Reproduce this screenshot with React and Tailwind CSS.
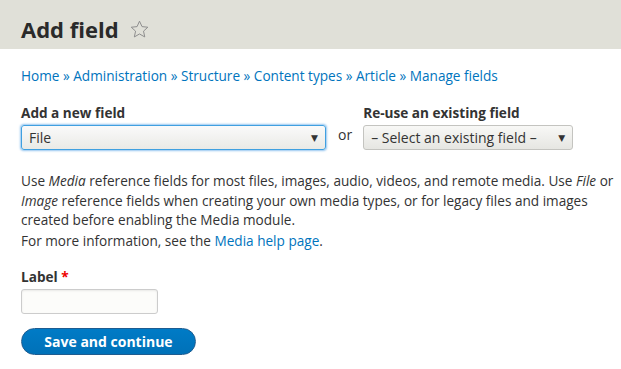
export default function App() {
  const font = { fontFamily: '"Open Sans", "DejaVu Sans", sans-serif' };
  return (
    <div className="min-h-[369px] w-[621px] bg-white text-[#333]" style={font}>
      {/* page title bar */}
      <div className="flex h-[49px] items-center gap-[10px] bg-[#e0e0d8] pl-[21px] pt-[9px]">
        <h1 className="text-[22px] font-bold leading-none text-[#2a2a2a]">Add field</h1>
        <svg width="21" height="21" viewBox="0 0 24 24" className="mt-[1px]">
          <path
            d="M12 2.5l2.9 6.2 6.6.7-4.9 4.5 1.4 6.6L12 17.1l-5.9 3.4 1.4-6.6-4.9-4.5 6.6-.7z"
            fill="none"
            stroke="#8a8a8a"
            strokeWidth="1.1"
            strokeLinejoin="round"
          />
        </svg>
      </div>

      <div className="pl-[21px] pr-[2px]">
        {/* breadcrumb */}
        <nav className="mt-[17px] text-[13.6px] leading-5 text-[#0074bd]">
          Home » Administration » Structure » Content types » Article » Manage fields
        </nav>

        {/* field selectors */}
        <div className="mt-[17px] flex items-end">
          <div>
            <label className="block text-[13.6px] font-bold leading-5">Add a new field</label>
            <div className="mt-[2px] flex h-[25px] w-[305px] items-center justify-between rounded-[3px] border border-[#40a0e0] bg-gradient-to-b from-[#fafafa] to-[#eaeae6] px-[7px] text-[14px] shadow-[0_0_2px_1px_rgba(80,160,230,0.6)]">
              <span>File</span>
              <span className="text-[9px]">▼</span>
            </div>
          </div>
          <span className="ml-[12px] mr-[11px] mb-[5px] text-[14px]">or</span>
          <div>
            <label className="block text-[13.6px] font-bold leading-5">Re-use an existing field</label>
            <div className="mt-[2px] flex h-[25px] w-[210px] items-center justify-between rounded-[3px] border border-[#c4c4c0] bg-gradient-to-b from-[#f8f8f6] to-[#e6e6e2] px-[7px] text-[14px]">
              <span>– Select an existing field –</span>
              <span className="text-[9px]">▼</span>
            </div>
          </div>
        </div>

        {/* description */}
        <div className="mt-[21px] text-[13.6px] leading-[19.5px]">
          <p>
            Use <em>Media</em> reference fields for most files, images, audio, videos, and remote media. Use{' '}
            <em>File</em> or <em>Image</em> reference fields when creating your own media types, or for legacy files
            and images created before enabling the Media module.
          </p>
          <p className="mt-[1px]">
            For more information, see the <span className="text-[#0074bd]">Media help page</span>.
          </p>
        </div>

        {/* label input */}
        <div className="mt-[17px]">
          <label className="block text-[13.6px] font-bold leading-5">
            Label <span className="text-[#e00]">*</span>
          </label>
          <div className="mt-[2px] h-[25px] w-[137px] rounded-[3px] border border-[#ccc] bg-[#fcfcfa] shadow-[inset_0_1px_2px_rgba(0,0,0,0.08)]" />
        </div>

        <button className="mt-[14px] h-[27px] w-[175px] rounded-full border border-[#1e5c90] bg-gradient-to-b from-[#007bc6] to-[#0071b8] text-[14px] font-bold text-white">
          Save and continue
        </button>
      </div>
    </div>
  );
}
